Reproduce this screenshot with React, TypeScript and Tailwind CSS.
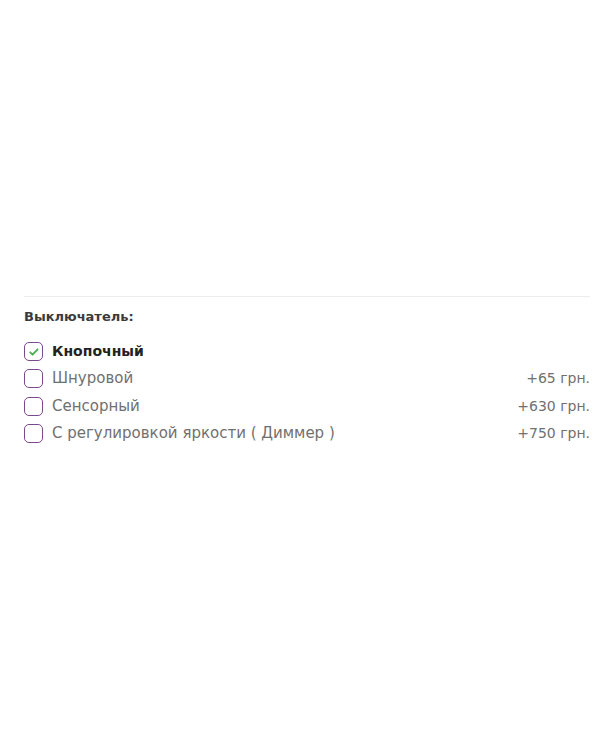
import React from "react";

type Option = { label: string; price?: string; checked?: boolean };

const options: Option[] = [
  { label: "Кнопочный", checked: true },
  { label: "Шнуровой", price: "+65 грн." },
  { label: "Сенсорный", price: "+630 грн." },
  { label: "С регулировкой яркости ( Диммер )", price: "+750 грн." },
];

function Box({ checked }: { checked?: boolean }) {
  return (
    <span className="flex h-[19px] w-[19px] shrink-0 items-center justify-center rounded-[5px] border-[1.5px] border-[#7a4a8c] bg-white">
      {checked && (
        <svg width="12" height="12" viewBox="0 0 12 12" fill="none">
          <path d="M2.2 6.3l2.4 2.4 5-5.4" stroke="#4caf50" strokeWidth="1.8" strokeLinecap="round" strokeLinejoin="round" />
        </svg>
      )}
    </span>
  );
}

export default function App() {
  return (
    <div className="min-h-[750px] w-[600px] bg-white px-6 pt-[296px] font-['DejaVu_Sans',sans-serif]">
      <div className="mr-[-14px] border-t border-[#ececec]" />
      <div className="pt-[11px] text-[13px] font-semibold text-[#3a3a3a] leading-[18px]">Выключатель:</div>
      <ul className="mt-[16px] flex flex-col gap-[8.3px]">
        {options.map((o) => (
          <li key={o.label} className="flex h-[19px] items-center gap-[9px] leading-[19px]">
            <Box checked={o.checked} />
            <span className={o.checked ? "text-[14px] font-bold text-[#222]" : "text-[15px] text-[#707070]"}>{o.label}</span>
            {o.price && <span className="ml-auto mr-[-14px] text-[14px] text-[#707070]">{o.price}</span>}
          </li>
        ))}
      </ul>
    </div>
  );
}
